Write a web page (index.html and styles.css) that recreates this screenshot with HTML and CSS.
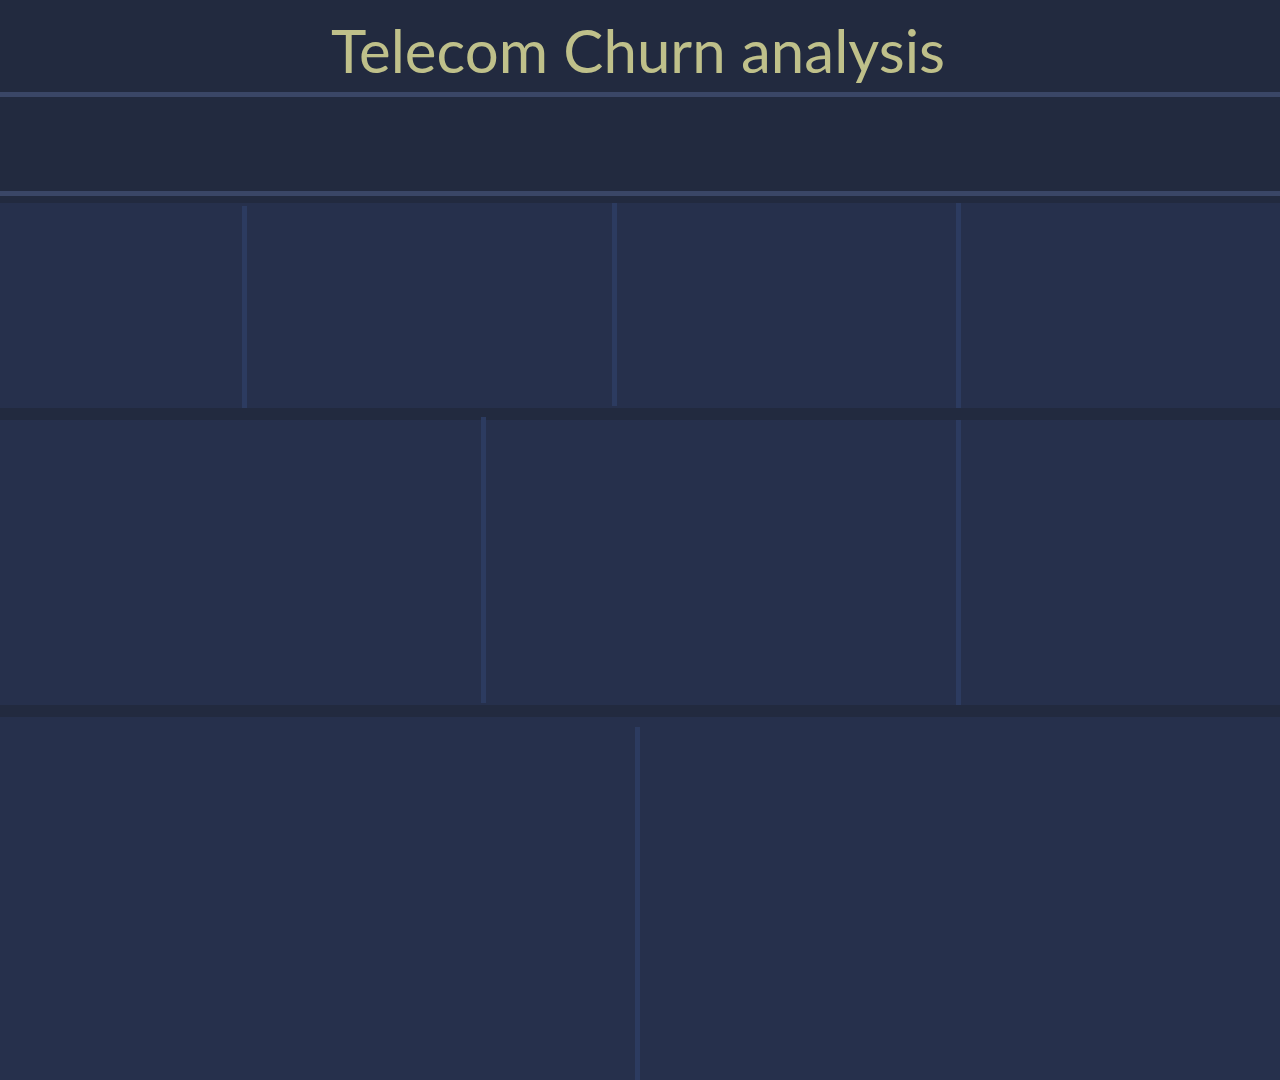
FILE: index.html
```html
<!DOCTYPE html>
<html>
<head>
<meta charset="utf-8">
<title>Telecom Churn analysis</title>
<link rel="stylesheet" href="styles.css">
</head>
<body>
<header class="header">
  <h1 class="title">Telecom Churn analysis</h1>
</header>
<section class="filters"></section>
<main class="rows">
  <div class="row row-1">
    <div class="panel p-242"></div>
    <div class="divider d-late"></div>
    <div class="panel p-365"></div>
    <div class="divider d-short"></div>
    <div class="panel p-339"></div>
    <div class="divider"></div>
    <div class="panel p-rest"></div>
  </div>
  <div class="row row-2">
    <div class="panel p-481"></div>
    <div class="divider d-early"></div>
    <div class="panel p-470"></div>
    <div class="divider"></div>
    <div class="panel p-rest"></div>
  </div>
  <div class="row row-3">
    <div class="panel p-635"></div>
    <div class="divider d-late10"></div>
    <div class="panel p-rest"></div>
  </div>
</main>
</body>
</html>
```

FILE: styles.css
```css
html, body {
  margin: 0;
  padding: 0;
  background: #222a3f;
  height: 1080px;
  overflow: hidden;
}

.header {
  height: 92px;
  border-bottom: 5px solid #3a4666;
  display: flex;
  justify-content: center;
  align-items: flex-start;
}

.title {
  margin: 0;
  padding-top: 14px;
  padding-right: 4px;
  font-family: Lato, "Liberation Sans", sans-serif;
  font-weight: 400;
  font-size: 60px;
  line-height: 72px;
  color: #bfc08a;
}

.filters {
  height: 94px;
  border-bottom: 5px solid #3a4666;
}

.rows {
  padding-top: 7px;
  display: flex;
  flex-direction: column;
  gap: 12px;
}

.row {
  display: flex;
  background: #26304c;
}

.row-1 { height: 205px; }
.row-2 { height: 285px; }
.row-3 { height: 400px; }

.panel {
  flex: none;
}

.p-242 { width: 242px; }
.p-365 { width: 365px; }
.p-339 { width: 339px; }
.p-481 { width: 481px; }
.p-470 { width: 470px; }
.p-635 { width: 635px; }
.p-rest { flex: 1; }

.divider {
  flex: none;
  width: 5px;
  background: #2c3b60;
}

.d-late {
  margin-top: 3px;
}

.d-short {
  margin-bottom: 2px;
}

.d-early {
  margin-top: -3px;
  margin-bottom: 2px;
}

.d-late10 {
  margin-top: 10px;
}
```
